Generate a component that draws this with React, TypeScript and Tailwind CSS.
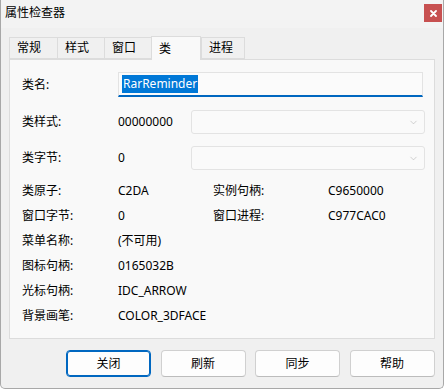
import { ChevronDown } from 'lucide-react';

const tabs = [
    { label: '常规', w: 'w-[49px]' },
    { label: '样式', w: 'w-[48px]' },
    { label: '窗口', w: 'w-[48px]' },
    { label: '类', w: 'w-[50px]', active: true },
    { label: '进程', w: 'w-[44px]' },
];

const info: [string, string, string?, string?][] = [
    ['类原子:', 'C2DA', '实例句柄:', 'C9650000'],
    ['窗口字节:', '0', '窗口进程:', 'C977CAC0'],
    ['菜单名称:', '(不可用)'],
    ['图标句柄:', '0165032B'],
    ['光标句柄:', 'IDC_ARROW'],
    ['背景画笔:', 'COLOR_3DFACE'],
];

function Combo() {
    return (
        <div className="ml-[18px] flex h-[24px] w-[234px] items-center justify-end rounded-[3px] border border-[#e3e3e3] bg-[#fafafa] pr-[5px]">
            <ChevronDown className="h-[11px] w-[11px] text-[#b0b0b0]" strokeWidth={1.25} />
        </div>
    );
}

export default function App() {
    return (
        <div
            className="flex h-[389px] w-[444px] flex-col rounded-b-[5px] border-x border-b border-[#a8a8a8] bg-[#f0f0f0] text-[12px] text-black"
            style={{ fontFamily: '"Noto Sans", "Noto Sans CJK SC", sans-serif' }}
        >
            {/* Title bar */}
            <div className="flex h-[28px] items-start justify-between bg-[#f3f3f3]">
                <span className="ml-[4px] mt-[5px] leading-[16px]">属性检查器</span>
                <button className="mr-[1px] mt-[4px] flex h-[18px] w-[18px] items-center justify-center bg-[#c75050]">
                    <svg width="7" height="7" viewBox="0 0 7 7">
                        <path d="M1 1L6 6M6 1L1 6" stroke="white" strokeWidth="1.8" strokeLinecap="round" />
                    </svg>
                </button>
            </div>

            {/* Tabs */}
            <div className="ml-[8px] mt-[8px] flex h-[23px] items-end">
                {tabs.map((t) =>
                    t.active ? (
                        <div
                            key={t.label}
                            className={`${t.w} relative -mb-px flex h-[24px] items-center border-x border-t border-[#dcdcdc] bg-[#f9f9f9] pl-[7px]`}
                        >
                            {t.label}
                        </div>
                    ) : (
                        <div
                            key={t.label}
                            className={`${t.w} -mr-px flex h-[22px] items-center border border-[#dcdcdc] bg-[#f0f0f0] pl-[7px]`}
                        >
                            {t.label}
                        </div>
                    ),
                )}
            </div>

            {/* Panel */}
            <div className="ml-[8px] h-[280px] w-[426px] border border-[#dcdcdc] bg-[#f9f9f9] pl-[12px] pt-[12px]">
                <div className="flex h-[25px] items-center">
                    <span className="w-[96px]">类名:</span>
                    <div className="flex h-[25px] w-[305px] items-center border border-b-2 border-[#e3e3e3] border-b-[#0067c0] bg-[#fbfbfb] pl-[3px]">
                        <span className="bg-[#0078d7] px-[1px] leading-[18px] text-white">RarReminder</span>
                    </div>
                </div>
                <div className="mt-[13px] flex h-[24px] items-center">
                    <span className="w-[96px]">类样式:</span>
                    <span className="w-[55px]">00000000</span>
                    <Combo />
                </div>
                <div className="mt-[12px] flex h-[24px] items-center">
                    <span className="w-[96px]">类字节:</span>
                    <span className="w-[55px]">0</span>
                    <Combo />
                </div>
                <div className="mt-[8px] grid grid-cols-[96px_95px_115px_1fr]">
                    {info.map(([a, b, c, d]) => (
                        <div key={a} className="contents">
                            <span className="flex h-[25px] items-center">{a}</span>
                            <span className="flex h-[25px] items-center">{b}</span>
                            <span className="flex h-[25px] items-center">{c ?? ''}</span>
                            <span className="flex h-[25px] items-center">{d ?? ''}</span>
                        </div>
                    ))}
                </div>
            </div>

            {/* Buttons */}
            <div className="ml-[65px] mt-[11px] flex gap-[9.5px]">
                <button className="h-[27px] w-[85px] rounded-[4px] border border-[#0067c0] bg-[#fdfdfd] shadow-[inset_0_0_0_1px_#0067c0]">
                    关闭
                </button>
                {['刷新', '同步', '帮助'].map((l) => (
                    <button
                        key={l}
                        className="h-[27px] w-[85px] rounded-[4px] border border-[#d0d0d0] border-b-[#bcbcbc] bg-[#fdfdfd]"
                    >
                        {l}
                    </button>
                ))}
            </div>
        </div>
    );
}
